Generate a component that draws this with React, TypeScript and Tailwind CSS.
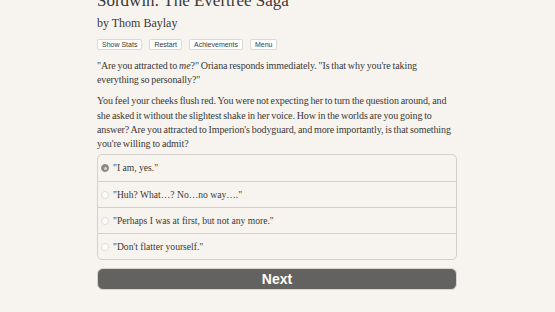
import { useState } from 'react';

const choices = [
  '"I am, yes."',
  '"Huh? What…? No…no way…."',
  '"Perhaps I was at first, but not any more."',
  '"Don\'t flatter yourself."',
];

export default function App() {
  const [picked, setPicked] = useState(0);

  return (
    <div className="h-[312px] w-full overflow-hidden bg-[#f7f4f0] text-[#3a3835]" style={{ fontFamily: '"Liberation Serif", "DejaVu Serif", serif' }}>
      <div className="ml-[97px] w-[360px] -mt-[9px]">
        <h1 className="text-[17px] leading-[20px]">Sordwin: The Evertree Saga</h1>
        <p className="mt-[4px] text-[12px] leading-[16px]">by Thom Baylay</p>

        {/* Toolbar */}
        <div className="mt-[8px] flex gap-[7px]" style={{ fontFamily: '"Liberation Sans", Arial, sans-serif' }}>
          {['Show Stats', 'Restart', 'Achievements', 'Menu'].map((b) => (
            <button key={b} className="h-[11px] rounded-[2px] border border-[#dcd8d3] bg-white px-[4px] text-[7px] leading-[9px] text-[#3a3835]">
              {b}
            </button>
          ))}
        </div>

        {/* Story text */}
        <div className="mt-[9px] w-[359px] text-[10px] leading-[14.2px] tracking-[-0.1px] [word-spacing:-0.5px]">
          <p>"Are you attracted to <i>me</i>?" Oriana responds immediately. "Is that why you're taking everything so personally?"</p>
          <p className="mt-[7px]">
            You feel your cheeks flush red. You were not expecting her to turn the question around, and she asked it without the slightest shake in her voice. How in the worlds are you going to answer? Are you attracted to Imperion's bodyguard, and more importantly, is that something you're willing to admit?
          </p>
        </div>

        {/* Choices */}
        <div className="mt-[3px] rounded-[5px] border border-[#d3cfca]">
          {choices.map((c, i) => (
            <label key={i} className={`flex h-[26px] items-center gap-[4px] pl-[3px] text-[9.6px] ${i > 0 ? 'border-t border-[#d3cfca]' : ''}`}>
              <span
                onClick={() => setPicked(i)}
                className={`flex h-[8px] w-[8px] items-center justify-center rounded-full border ${picked === i ? 'border-[#8c8a87] bg-[#8c8a87]' : 'border-[#dcd9d5] bg-white'}`}
              >
                {picked === i && <span className="h-[3px] w-[3px] rounded-full bg-[#d9d6d2]" />}
              </span>
              {c}
            </label>
          ))}
        </div>

        <button className="mt-[8px] h-[22px] w-full rounded-[6px] border border-[#d8d4cf] bg-[#636260] text-[14px] font-bold text-white" style={{ fontFamily: '"Liberation Sans", Arial, sans-serif' }}>
          Next
        </button>
      </div>
    </div>
  );
}
